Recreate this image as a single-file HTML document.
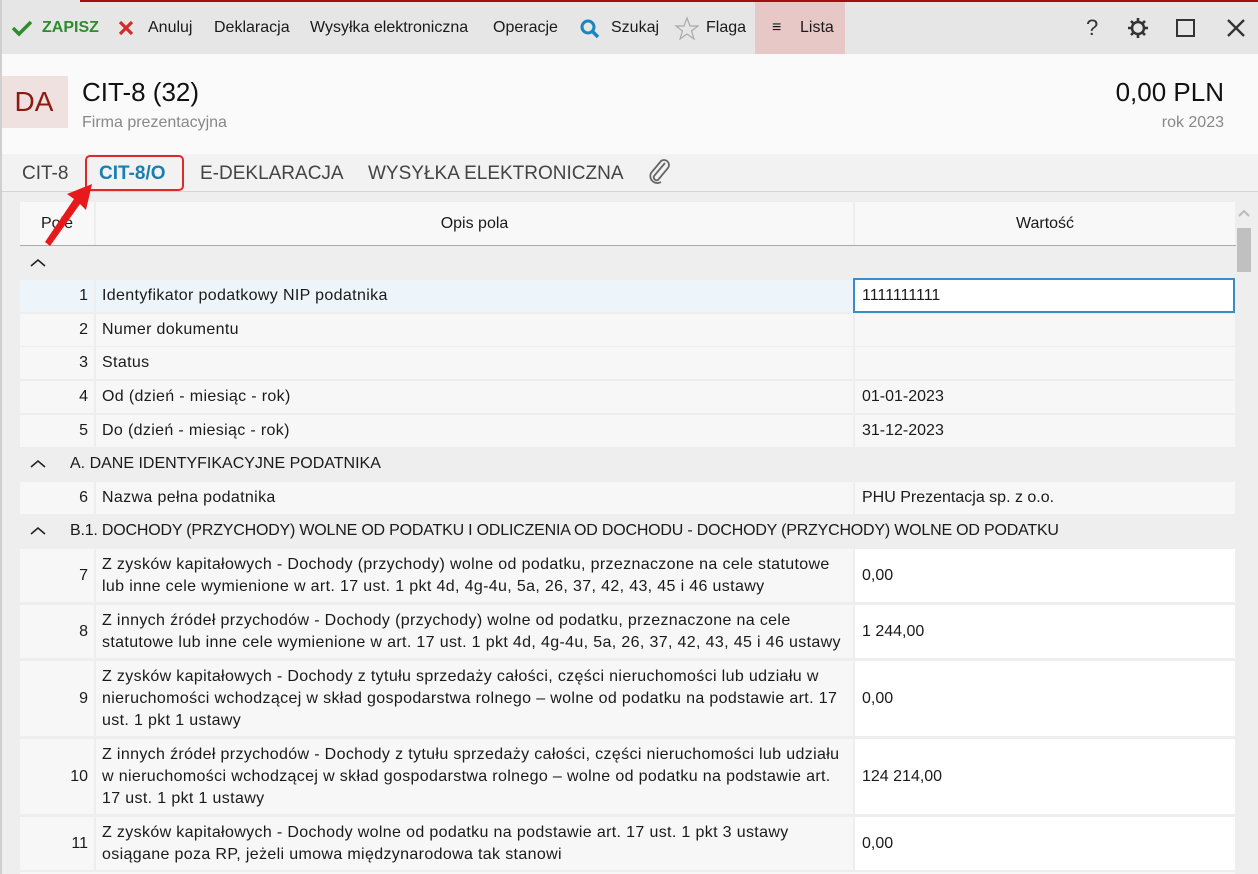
<!DOCTYPE html>
<html><head><meta charset="utf-8"><style>
*{margin:0;padding:0;box-sizing:border-box}
body{width:1258px;height:874px;overflow:hidden;background:#eee;font-family:"Liberation Sans",sans-serif;color:#1a1a1a;position:relative;font-size:16px}
.a{position:absolute}
.tb{left:0;top:0;width:1258px;height:54px;background:#e6e6e6}
.tb .i{position:absolute;top:19px;font-size:16px;white-space:nowrap}
.c{position:absolute;background:#f7f7f7;overflow:hidden;white-space:nowrap}
.n{text-align:right;padding-right:6px;display:flex;align-items:center;justify-content:flex-end}
.d{padding:0 6px;display:flex;align-items:center;line-height:22px;letter-spacing:0.35px}
.v{padding:0 7px;display:flex;align-items:center}
.w{background:#fff}
.g{position:absolute;left:30px;font-size:16px;white-space:nowrap}
.chev{position:absolute;left:30px;width:16px;height:10px}
</style></head><body>
<div class="a" style="left:0;top:0;width:2px;height:874px;background:#d0d0d0;z-index:5"></div>
<div class="a tb"></div>
<div class="a" style="left:80px;top:0;width:1178px;height:2px;background:#a01010"></div>
<div class="a" style="left:755px;top:2px;width:90px;height:52px;background:#e8c8c6"></div>
<svg class="a" style="left:11px;top:19px" width="22" height="18"><path d="M2 9 L8 15 L20 3" stroke="#2e8b2e" stroke-width="3.5" fill="none"/></svg>
<div class="tb"><span class="i" style="left:42px;color:#2e8b2e;font-weight:bold">ZAPISZ</span>
<span class="i" style="left:148px">Anuluj</span><span class="i" style="left:214px">Deklaracja</span><span class="i" style="left:310px">Wysyłka elektroniczna</span><span class="i" style="left:493px">Operacje</span><span class="i" style="left:611px">Szukaj</span><span class="i" style="left:706px">Flaga</span><span class="i" style="left:772px">≡</span><span class="i" style="left:800px">Lista</span></div>
<svg class="a" style="left:118px;top:20px" width="16" height="16"><path d="M2 2L14 14M14 2L2 14" stroke="#d62a2a" stroke-width="3.2"/></svg>
<svg class="a" style="left:579px;top:18px" width="22" height="22"><circle cx="9" cy="9" r="6" stroke="#1a86c0" stroke-width="3" fill="none"/><path d="M13 13L19 19" stroke="#1a86c0" stroke-width="3.5"/></svg>
<svg class="a" style="left:674px;top:16px" width="26" height="24"><path d="M13 2L16 10H24L17.5 15L20 23L13 18L6 23L8.5 15L2 10H10Z" stroke="#aaa" fill="none" stroke-width="1.2"/></svg>
<div class="a" style="left:1086px;top:15px;font-size:22px;color:#333">?</div>
<svg class="a" style="left:1127px;top:17px" width="22" height="22"><circle cx="11" cy="11" r="6" stroke="#333" stroke-width="2.5" fill="none"/><path d="M11 1V5M11 17V21M1 11H5M17 11H21M4 4L7 7M15 15L18 18M4 18L7 15M15 7L18 4" stroke="#333" stroke-width="2.6"/></svg>
<div class="a" style="left:1176px;top:19px;width:19px;height:18px;border:2.5px solid #333"></div>
<svg class="a" style="left:1226px;top:18px" width="20" height="20"><path d="M2 2L18 18M18 2L2 18" stroke="#333" stroke-width="2.3"/></svg>
<div class="a" style="left:0;top:54px;width:1258px;height:100px;background:#fafafa"></div>
<div class="a" style="left:0;top:76px;width:68px;height:52px;background:#efe1df;color:#8b1a10;font-size:28px;text-align:center;line-height:52px">DA</div>
<div class="a" style="left:82px;top:77px;font-size:26px;color:#111">CIT-8 (32)</div>
<div class="a" style="left:82px;top:114px;font-size:16px;color:#888">Firma prezentacyjna</div>
<div class="a" style="right:34px;top:77px;font-size:26px;color:#111">0,00 PLN</div>
<div class="a" style="right:34px;top:114px;font-size:16px;color:#888">rok 2023</div>
<div class="a" style="left:0;top:154px;width:1258px;height:38px;background:#f2f2f2;border-bottom:1px solid #d4d4d4"></div>
<div class="a" style="left:22px;top:163px;font-size:19px;color:#444">CIT-8</div>
<div class="a" style="left:85px;top:155px;width:99px;height:36px;border:2px solid #e0282a;border-radius:5px"></div>
<div class="a" style="left:99px;top:163px;font-size:19px;color:#1a7eb0;font-weight:bold">CIT-8/O</div>
<div class="a" style="left:200px;top:163px;font-size:19px;color:#444">E-DEKLARACJA</div>
<div class="a" style="left:368px;top:163px;font-size:19px;color:#444">WYSYŁKA ELEKTRONICZNA</div>
<svg class="a" style="left:646px;top:158px" width="26" height="28"><path d="M19 5L8 18a3 3 0 0 0 4 4L22 10a5 5 0 0 0-7-7L5 15a7 7 0 0 0 10 9" stroke="#666" stroke-width="1.8" fill="none"/></svg>
<div class="c" style="left:20px;top:202px;width:74px;height:43px;background:#f8f8f8;display:flex;align-items:center;justify-content:center">Pole</div>
<div class="c" style="left:96px;top:202px;width:757px;height:43px;background:#f8f8f8;display:flex;align-items:center;justify-content:center">Opis pola</div>
<div class="c" style="left:855px;top:202px;width:380px;height:43px;background:#f8f8f8;display:flex;align-items:center;justify-content:center">Wartość</div>
<div class="a" style="left:20px;top:245px;width:1216px;height:1px;background:#aaa"></div>
<svg class="a" style="left:40px;top:180px;z-index:6" width="60" height="70"><path d="M52 4L46 30L40 24L10 66L5 62L34 19L27 14Z" fill="#e8191b"/></svg>
<svg class="a" style="left:1237px;top:208px" width="14" height="10"><path d="M2 8L7 3L12 8" stroke="#bbb" stroke-width="2" fill="none"/></svg>
<div class="a" style="left:1237px;top:228px;width:14px;height:44px;background:#c0c0c0"></div>
<svg class="a chev" style="top:258px"><path d="M1 8L8 2L15 8" stroke="#222" stroke-width="1.6" fill="none"/></svg>
<svg class="a chev" style="top:459px"><path d="M1 8L8 2L15 8" stroke="#222" stroke-width="1.6" fill="none"/></svg>
<div class="g" style="left:70px;top:455px">A. DANE IDENTYFIKACYJNE PODATNIKA</div>
<svg class="a chev" style="top:526px"><path d="M1 8L8 2L15 8" stroke="#222" stroke-width="1.6" fill="none"/></svg>
<div class="g" style="left:70px;top:522px;letter-spacing:-0.2px">B.1. DOCHODY (PRZYCHODY) WOLNE OD PODATKU I ODLICZENIA OD DOCHODU - DOCHODY (PRZYCHODY) WOLNE OD PODATKU</div>
<div class="c n" style="left:20px;top:280px;width:74px;height:32px;background:#eef5fa">1</div>
<div class="c d" style="left:96px;top:280px;width:757px;height:32px;background:#eef5fa">Identyfikator podatkowy NIP podatnika</div>
<div class="c v w" style="left:853px;top:278px;width:382px;height:35px;border:2px solid #3a8cc8">1111111111</div>
<div class="c n" style="left:20px;top:314px;width:74px;height:32px">2</div><div class="c d" style="left:96px;top:314px;width:757px;height:32px">Numer dokumentu</div><div class="c v" style="left:855px;top:314px;width:380px;height:32px"></div>
<div class="c n" style="left:20px;top:347px;width:74px;height:32px">3</div><div class="c d" style="left:96px;top:347px;width:757px;height:32px">Status</div><div class="c v" style="left:855px;top:347px;width:380px;height:32px"></div>
<div class="c n" style="left:20px;top:381px;width:74px;height:32px">4</div><div class="c d" style="left:96px;top:381px;width:757px;height:32px">Od (dzień - miesiąc - rok)</div><div class="c v" style="left:855px;top:381px;width:380px;height:32px">01-01-2023</div>
<div class="c n" style="left:20px;top:415px;width:74px;height:32px">5</div><div class="c d" style="left:96px;top:415px;width:757px;height:32px">Do (dzień - miesiąc - rok)</div><div class="c v" style="left:855px;top:415px;width:380px;height:32px">31-12-2023</div>
<div class="c n" style="left:20px;top:482px;width:74px;height:32px">6</div><div class="c d" style="left:96px;top:482px;width:757px;height:32px">Nazwa pełna podatnika</div><div class="c v" style="left:855px;top:482px;width:380px;height:32px">PHU Prezentacja sp. z o.o.</div>
<div class="c n" style="left:20px;top:549px;width:74px;height:53px">7</div><div class="c d" style="left:96px;top:549px;width:757px;height:53px">Z zysków kapitałowych - Dochody (przychody) wolne od podatku, przeznaczone na cele statutowe<br>lub inne cele wymienione w art. 17 ust. 1 pkt 4d, 4g-4u, 5a, 26, 37, 42, 43, 45 i 46 ustawy</div><div class="c v w" style="left:855px;top:549px;width:380px;height:53px">0,00</div>
<div class="c n" style="left:20px;top:605px;width:74px;height:53px">8</div><div class="c d" style="left:96px;top:605px;width:757px;height:53px">Z innych źródeł przychodów - Dochody (przychody) wolne od podatku, przeznaczone na cele<br>statutowe lub inne cele wymienione w art. 17 ust. 1 pkt 4d, 4g-4u, 5a, 26, 37, 42, 43, 45 i 46 ustawy</div><div class="c v w" style="left:855px;top:605px;width:380px;height:53px">1 244,00</div>
<div class="c n" style="left:20px;top:661px;width:74px;height:75px">9</div><div class="c d" style="left:96px;top:661px;width:757px;height:75px">Z zysków kapitałowych - Dochody z tytułu sprzedaży całości, części nieruchomości lub udziału w<br>nieruchomości wchodzącej w skład gospodarstwa rolnego – wolne od podatku na podstawie art. 17<br>ust. 1 pkt 1 ustawy</div><div class="c v w" style="left:855px;top:661px;width:380px;height:75px">0,00</div>
<div class="c n" style="left:20px;top:739px;width:74px;height:75px">10</div><div class="c d" style="left:96px;top:739px;width:757px;height:75px">Z innych źródeł przychodów - Dochody z tytułu sprzedaży całości, części nieruchomości lub udziału<br>w nieruchomości wchodzącej w skład gospodarstwa rolnego – wolne od podatku na podstawie art.<br>17 ust. 1 pkt 1 ustawy</div><div class="c v w" style="left:855px;top:739px;width:380px;height:75px">124 214,00</div>
<div class="c n" style="left:20px;top:817px;width:74px;height:53px">11</div><div class="c d" style="left:96px;top:817px;width:757px;height:53px">Z zysków kapitałowych - Dochody wolne od podatku na podstawie art. 17 ust. 1 pkt 3 ustawy<br>osiągane poza RP, jeżeli umowa międzynarodowa tak stanowi</div><div class="c v w" style="left:855px;top:817px;width:380px;height:53px">0,00</div>
<div class="c" style="left:20px;top:872px;width:1215px;height:2px"></div>
</body></html>
